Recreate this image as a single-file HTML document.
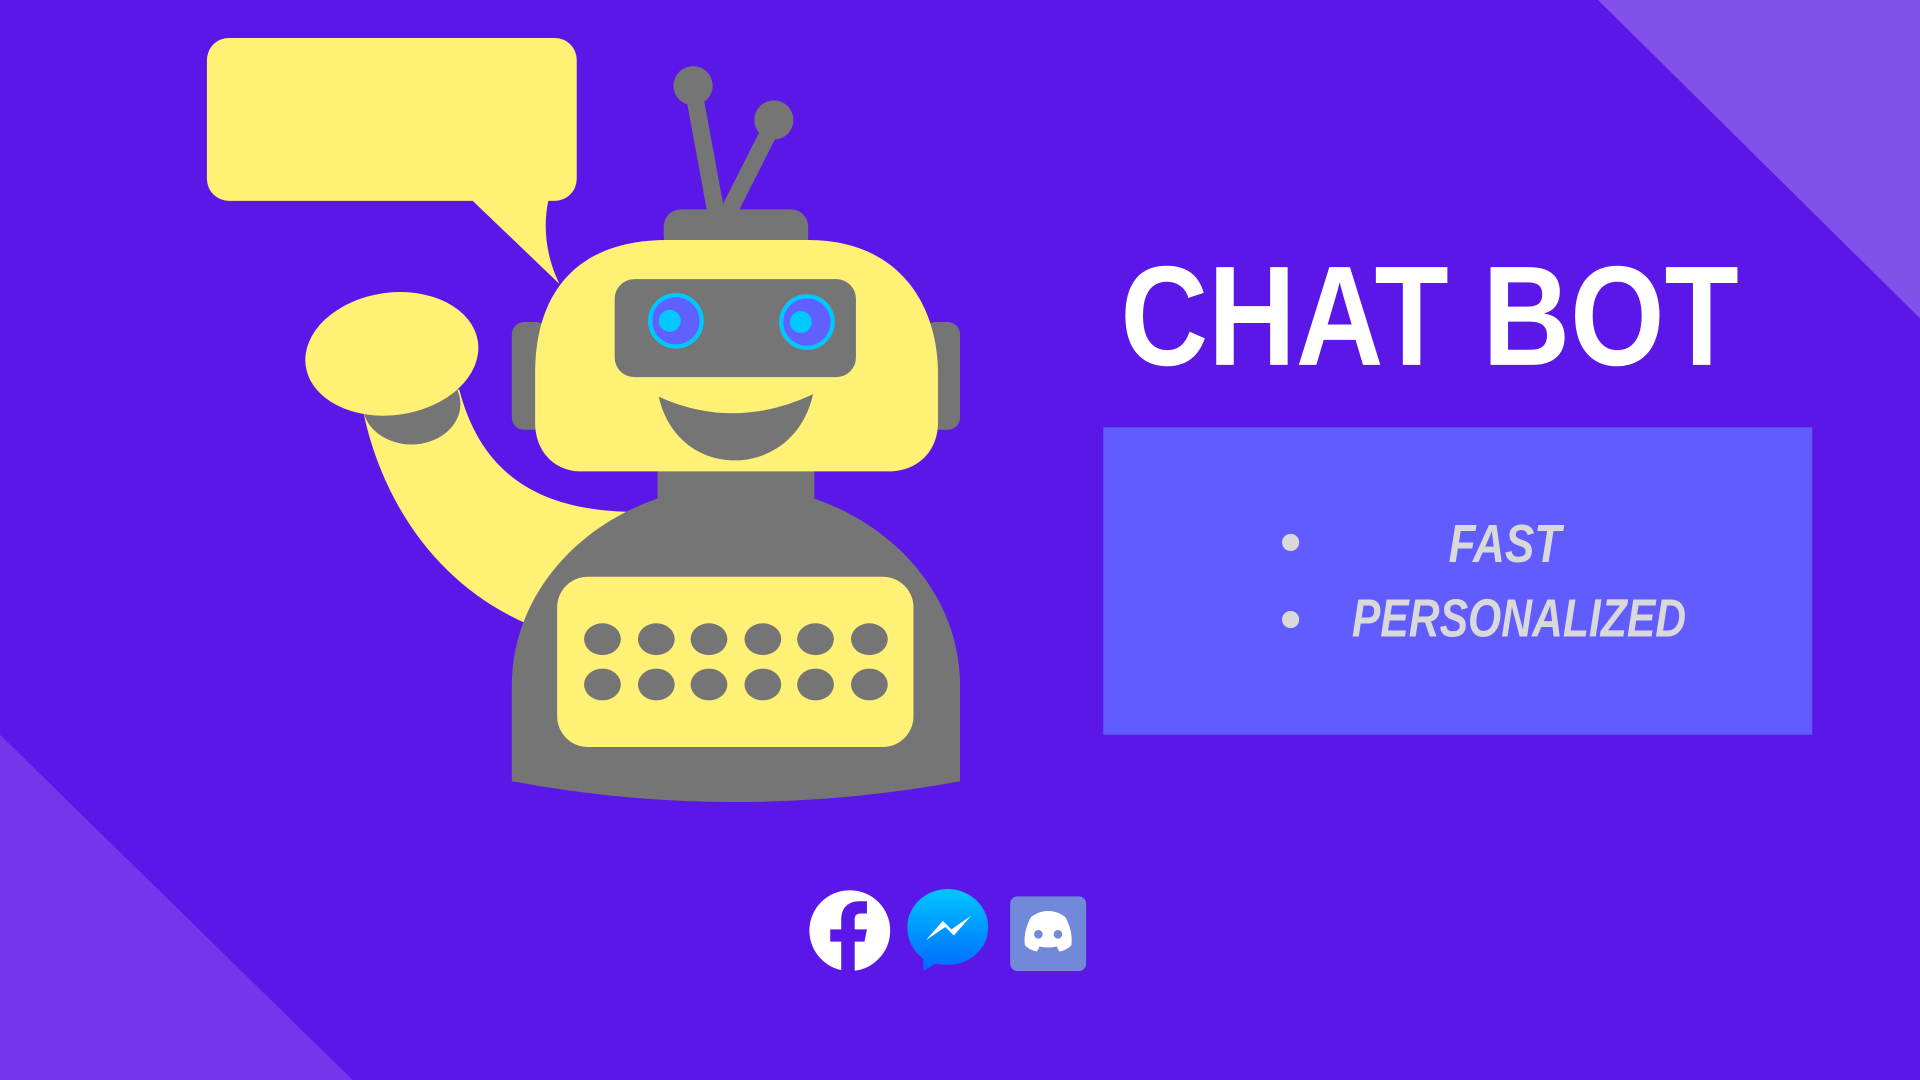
<!DOCTYPE html>
<html><head><meta charset="utf-8"><style>html,body{margin:0;padding:0;background:#5b17e8;overflow:hidden}svg{display:block}</style></head>
<body>
<svg width="1920" height="1080" viewBox="0 0 1568 882" xmlns="http://www.w3.org/2000/svg">
<defs><linearGradient id="mg" x1="0" y1="0" x2="0" y2="1"><stop offset="0" stop-color="#00c6ff"/><stop offset="1" stop-color="#0068ff"/></linearGradient></defs>
<rect width="1568" height="882" fill="#5b17e8"/>
<polygon points="1305,0 1568,0 1568,260" fill="#8450ea"/>
<polygon points="0,600 0,882 288,882" fill="#7535ea"/>
<rect x="169" y="31" width="302" height="133" rx="18" fill="#fff176"/>
<path d="M385,163 L457,232 C446,210 443,185 448,163 Z" fill="#fff176"/>
<line x1="566" y1="72" x2="585" y2="175" stroke="#757575" stroke-width="14"/>
<line x1="632" y1="100" x2="594" y2="175" stroke="#757575" stroke-width="14"/>
<circle cx="566" cy="70" r="16" fill="#757575"/>
<circle cx="632" cy="98" r="16" fill="#757575"/>
<rect x="542" y="171" width="118" height="36" rx="14" fill="#757575"/>
<rect x="418" y="263" width="30" height="88" rx="10" fill="#757575"/>
<rect x="754" y="263" width="30" height="88" rx="10" fill="#757575"/>
<path d="M297,338 C315,420 365,482 432,510 L530,450 L530,418 C450,420 395,395 375,318 Z" fill="#fff176"/>
<ellipse cx="336" cy="330" rx="40" ry="33" fill="#757575"/>
<ellipse cx="320" cy="289" rx="71" ry="50" transform="rotate(-8 320 289)" fill="#fff176"/>
<rect x="537" y="380" width="128" height="30" fill="#757575"/>
<path d="M418,638 L418,560 C418,470 500,398 601,396 C702,398 784,470 784,560 L784,638 Q600,672 418,638 Z" fill="#757575"/>
<rect x="455" y="471" width="291" height="139" rx="25" fill="#fff176"/>
<g fill="#757575">
<ellipse cx="492" cy="522" rx="15" ry="13"/><ellipse cx="536" cy="522" rx="15" ry="13"/><ellipse cx="579" cy="522" rx="15" ry="13"/><ellipse cx="623" cy="522" rx="15" ry="13"/><ellipse cx="666" cy="522" rx="15" ry="13"/><ellipse cx="710" cy="522" rx="15" ry="13"/>
<ellipse cx="492" cy="559" rx="15" ry="13"/><ellipse cx="536" cy="559" rx="15" ry="13"/><ellipse cx="579" cy="559" rx="15" ry="13"/><ellipse cx="623" cy="559" rx="15" ry="13"/><ellipse cx="666" cy="559" rx="15" ry="13"/><ellipse cx="710" cy="559" rx="15" ry="13"/>
</g>
<path d="M437,305 C437,240 470,196 545,196 L660,196 C735,196 766,250 766,305 L766,345 C766,368 750,385 725,385 L475,385 C452,385 437,368 437,345 Z" fill="#fff176"/>
<rect x="502" y="228" width="197" height="80" rx="16" fill="#757575"/>
<circle cx="552" cy="262" r="21" fill="#6060ff" stroke="#00c8ff" stroke-width="3.5"/>
<circle cx="547" cy="262" r="9" fill="#00c8ff"/>
<circle cx="659" cy="263" r="21" fill="#6060ff" stroke="#00c8ff" stroke-width="3.5"/>
<circle cx="654" cy="263" r="9" fill="#00c8ff"/>
<path d="M538,324 Q600,352 664,322 C656,358 628,376 600,376 C570,376 545,356 538,324 Z" fill="#757575"/>
<text x="915" y="298" textLength="505" lengthAdjust="spacingAndGlyphs" font-family="Liberation Sans, sans-serif" font-weight="bold" font-size="116" fill="#fff">CHAT BOT</text>
<rect x="901" y="349" width="579" height="251" fill="#615cff"/>
<circle cx="1054" cy="443" r="7" fill="#d9d9d9"/>
<circle cx="1054" cy="506" r="7" fill="#d9d9d9"/>
<text x="1229" y="459" text-anchor="middle" textLength="92" lengthAdjust="spacingAndGlyphs" font-family="Liberation Sans, sans-serif" font-style="italic" font-weight="bold" font-size="44" fill="#d9d9d9">FAST</text>
<text x="1104" y="520" textLength="273" lengthAdjust="spacingAndGlyphs" font-family="Liberation Sans, sans-serif" font-style="italic" font-weight="bold" font-size="44" fill="#d9d9d9">PERSONALIZED</text>
<circle cx="694" cy="760" r="33" fill="#fff"/>
<path d="M687,794 L687,769 L678,769 L678,759 L687,759 L687,751 C687,741 693,736 702,736 L708,736 L708,746 L703,746 C699,746 698,748 698,751 L698,759 L708,759 L706,769 L698,769 L698,794 Z" fill="#5b17e8"/>
<path d="M774,726 C792,726 807,740 807,757 C807,775 792,788 774,788 C770,788 767,788 764,787 L754,793 L754,783 C746,777 741,768 741,757 C741,740 756,726 774,726 Z" fill="url(#mg)"/>
<path d="M756,768 L770,752 L777,759 L793,748 L779,764 L772,757 Z" fill="#fff"/>
<rect x="825" y="732" width="62" height="61" rx="6" fill="#7289da"/>
<path d="M842,749 C847,745 852,744 856,744 C860,744 865,745 870,749 C874,756 876,764 875,772 C872,775 868,777 865,777 L863,773 C859,774 853,774 849,773 L847,777 C844,777 840,775 837,772 C836,764 838,756 842,749 Z" fill="#fff"/>
<circle cx="848" cy="763" r="3.5" fill="#7289da"/>
<circle cx="864" cy="763" r="3.5" fill="#7289da"/>
</svg>
</body></html>
